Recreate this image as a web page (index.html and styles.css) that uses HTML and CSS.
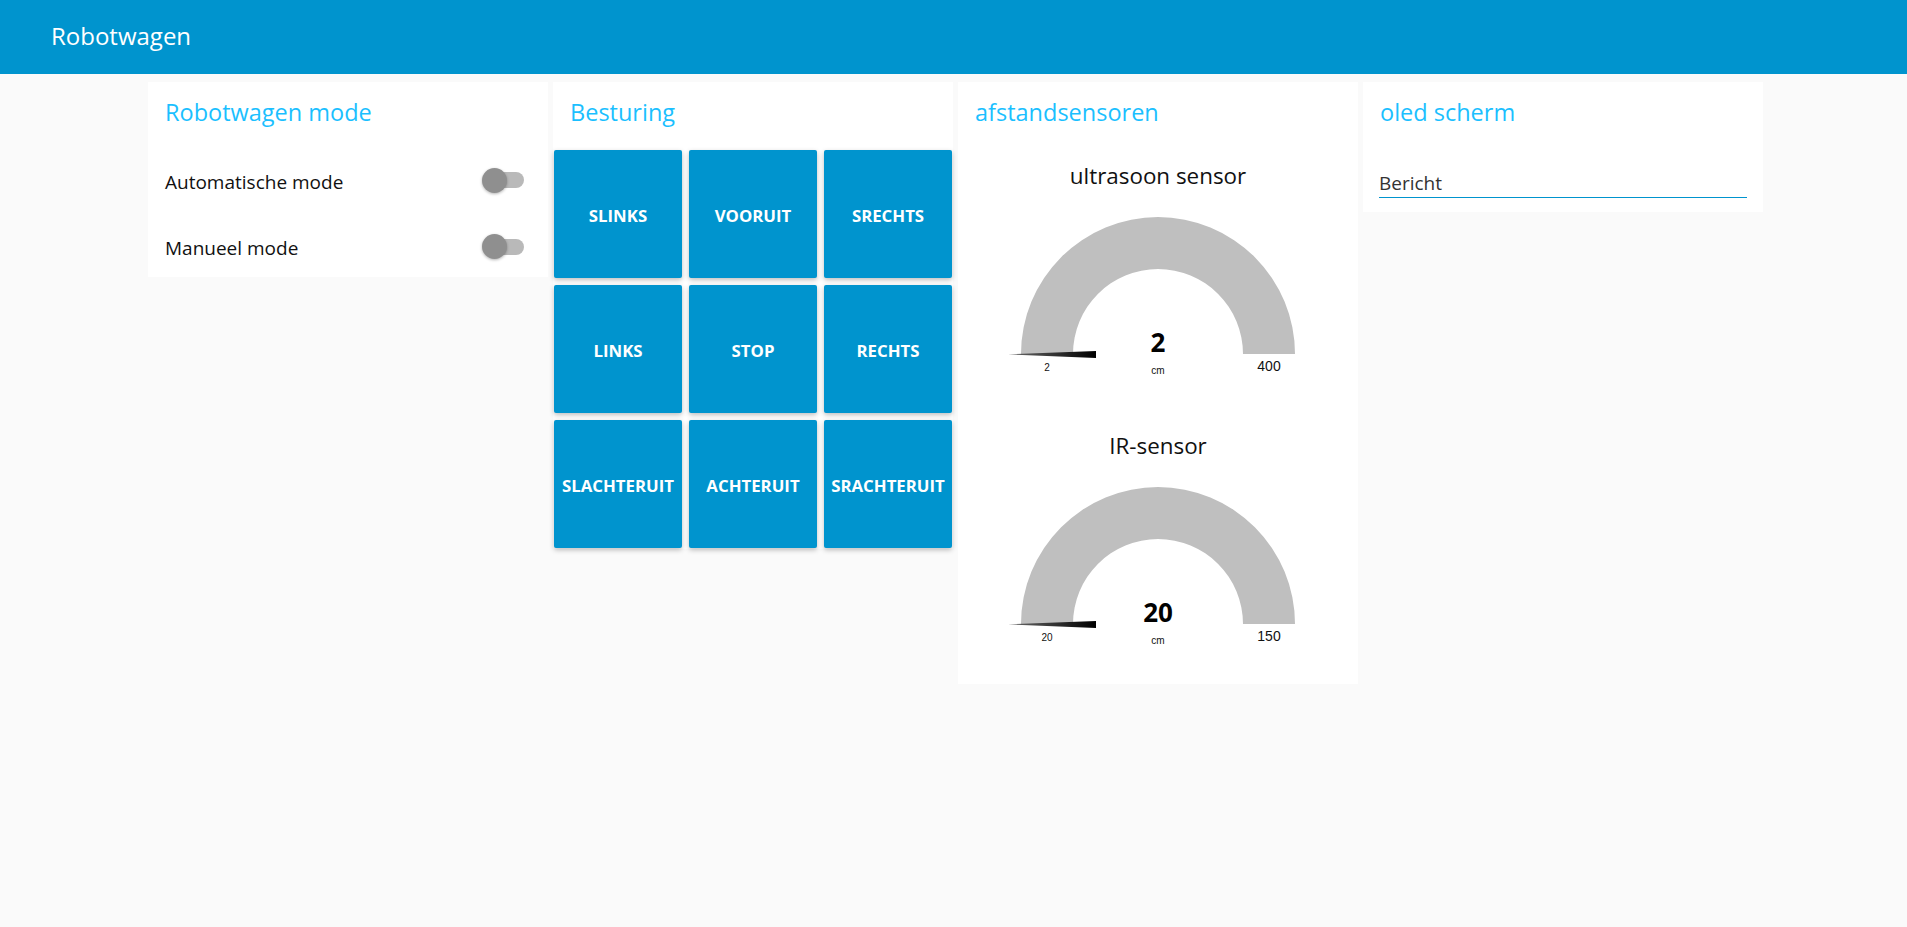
FILE: index.html
```html
<!DOCTYPE html>
<html lang="nl">
<head>
<meta charset="utf-8">
<title>Robotwagen</title>
<link rel="stylesheet" href="styles.css">
</head>
<body>
<header class="toolbar"><span class="toolbar-title">Robotwagen</span></header>
<main class="dashboard">
  <section class="group">
    <h2 class="group-title">Robotwagen mode</h2>
    <div class="rows">
      <div class="switch-row">
        <span class="switch-label">Automatische mode</span>
        <span class="switch"><span class="switch-track"></span><span class="switch-knob"></span></span>
      </div>
      <div class="switch-row">
        <span class="switch-label">Manueel mode</span>
        <span class="switch"><span class="switch-track"></span><span class="switch-knob"></span></span>
      </div>
    </div>
  </section>

  <section class="group group-buttons">
    <h2 class="group-title">Besturing</h2>
    <div class="button-grid">
      <button class="ctrl-btn">SLINKS</button>
      <button class="ctrl-btn">VOORUIT</button>
      <button class="ctrl-btn">SRECHTS</button>
      <button class="ctrl-btn">LINKS</button>
      <button class="ctrl-btn">STOP</button>
      <button class="ctrl-btn">RECHTS</button>
      <button class="ctrl-btn">SLACHTERUIT</button>
      <button class="ctrl-btn">ACHTERUIT</button>
      <button class="ctrl-btn">SRACHTERUIT</button>
    </div>
  </section>

  <section class="group group-gauges">
    <h2 class="group-title">afstandsensoren</h2>
    <div class="gauges">
      <svg class="gauge" width="400" height="262" viewBox="0 0 400 262">
        <defs>
          <linearGradient id="needle1" x1="0" y1="0" x2="1" y2="0">
            <stop offset="0" stop-color="#6a6a6a"/>
            <stop offset="1" stop-color="#000"/>
          </linearGradient>
        </defs>
        <text class="gauge-title" x="200" y="34" text-anchor="middle">ultrasoon sensor</text>
        <path class="gauge-arc" d="M63 204 A137 137 0 0 1 337 204 L285 204 A85 85 0 0 0 115 204 Z"/>
        <path d="M50 204.3 L138 201 L138 208 Z" fill="url(#needle1)"/>
        <text class="gauge-value" x="200" y="202" text-anchor="middle">2</text>
        <text class="gauge-unit" x="200" y="224" text-anchor="middle">cm</text>
        <text class="gauge-min" x="89" y="221" text-anchor="middle">2</text>
        <text class="gauge-max" x="311" y="221" text-anchor="middle">400</text>
      </svg>
      <svg class="gauge" width="400" height="262" viewBox="0 0 400 262">
        <defs>
          <linearGradient id="needle2" x1="0" y1="0" x2="1" y2="0">
            <stop offset="0" stop-color="#6a6a6a"/>
            <stop offset="1" stop-color="#000"/>
          </linearGradient>
        </defs>
        <text class="gauge-title" x="200" y="34" text-anchor="middle">IR-sensor</text>
        <path class="gauge-arc" d="M63 204 A137 137 0 0 1 337 204 L285 204 A85 85 0 0 0 115 204 Z"/>
        <path d="M50 204.3 L138 201 L138 208 Z" fill="url(#needle2)"/>
        <text class="gauge-value" x="200" y="202" text-anchor="middle">20</text>
        <text class="gauge-unit" x="200" y="224" text-anchor="middle">cm</text>
        <text class="gauge-min" x="89" y="221" text-anchor="middle">20</text>
        <text class="gauge-max" x="311" y="221" text-anchor="middle">150</text>
      </svg>
    </div>
  </section>

  <section class="group group-text">
    <h2 class="group-title">oled scherm</h2>
    <div class="input-row">
      <div class="text-input">Bericht</div>
    </div>
  </section>
</main>
</body>
</html>
```

FILE: styles.css
```css
* { box-sizing: border-box; }

html, body {
  margin: 0;
  padding: 0;
  background: #fafafa;
  font-family: "Open Sans", "Noto Sans", sans-serif;
  color: #111;
}

.toolbar {
  height: 74px;
  background: #0094ce;
  color: #fff;
  display: flex;
  align-items: center;
  padding: 0 0 3px 51px;
}

.toolbar-title {
  font-size: 24px;
  font-weight: 400;
}

.dashboard {
  display: flex;
  align-items: flex-start;
  gap: 5px;
  padding: 8px 0 0 148px;
}

.group {
  width: 400px;
  background: #fff;
}

.group-title {
  margin: 0;
  height: 68px;
  padding: 15px 0 0 17px;
  font-size: 23.5px;
  line-height: 30px;
  font-weight: 500;
  color: #1bbfff;
}

.rows {
  display: flex;
  flex-direction: column;
  gap: 6.5px;
}

.switch-row {
  height: 60px;
  display: flex;
  align-items: center;
  justify-content: space-between;
  padding: 0 24px 0 17px;
}

.switch-label {
  font-size: 19px;
  color: #111;
  padding-top: 3px;
}

.switch {
  position: relative;
  width: 42px;
  height: 25px;
}

.switch-track {
  position: absolute;
  left: 4.5px;
  top: 4.5px;
  width: 37.5px;
  height: 16px;
  border-radius: 8px;
  background: #b9b9b9;
}

.switch-knob {
  position: absolute;
  left: 0;
  top: 0;
  width: 25px;
  height: 25px;
  border-radius: 50%;
  background: #8f8f8f;
  box-shadow: 0 1px 3px rgba(0,0,0,0.3);
}

.group-buttons {
  padding-bottom: 1px;
}

.button-grid {
  display: grid;
  grid-template-columns: repeat(3, 128px);
  grid-auto-rows: 128px;
  gap: 7px;
  padding: 0 1px;
}

.ctrl-btn {
  border: 0;
  margin: 0;
  padding: 2px 0 0 0;
  border-radius: 2px;
  background: #0094ce;
  color: #fff;
  font-family: "Open Sans", "Noto Sans", sans-serif;
  font-size: 16.8px;
  font-weight: 700;
  box-shadow: 0 2px 5px rgba(0,0,0,0.26);
  cursor: pointer;
}

.group-gauges {
  padding-bottom: 2px;
}

.gauges {
  display: flex;
  flex-direction: column;
  gap: 8px;
}

.gauge {
  display: block;
}

.gauge-title {
  font-family: "Open Sans", "Noto Sans", sans-serif;
  font-size: 22.4px;
  font-weight: 500;
  fill: #111;
}

.gauge-arc {
  fill: #bfbfbf;
}

.gauge-value {
  font-family: "Open Sans", "Noto Sans", sans-serif;
  font-size: 26px;
  font-weight: 700;
  fill: #010101;
}

.gauge-unit,
.gauge-min {
  font-family: "Liberation Sans", Arial, sans-serif;
  font-size: 10px;
  fill: #111;
}

.gauge-max {
  font-family: "Liberation Sans", Arial, sans-serif;
  font-size: 14px;
  fill: #111;
}

.input-row {
  height: 62px;
  padding: 20px 16px 0 16px;
}

.text-input {
  font-size: 19px;
  color: #333;
  line-height: 27px;
  padding-left: 0;
  border-bottom: 1.5px solid #0094ce;
}
```
